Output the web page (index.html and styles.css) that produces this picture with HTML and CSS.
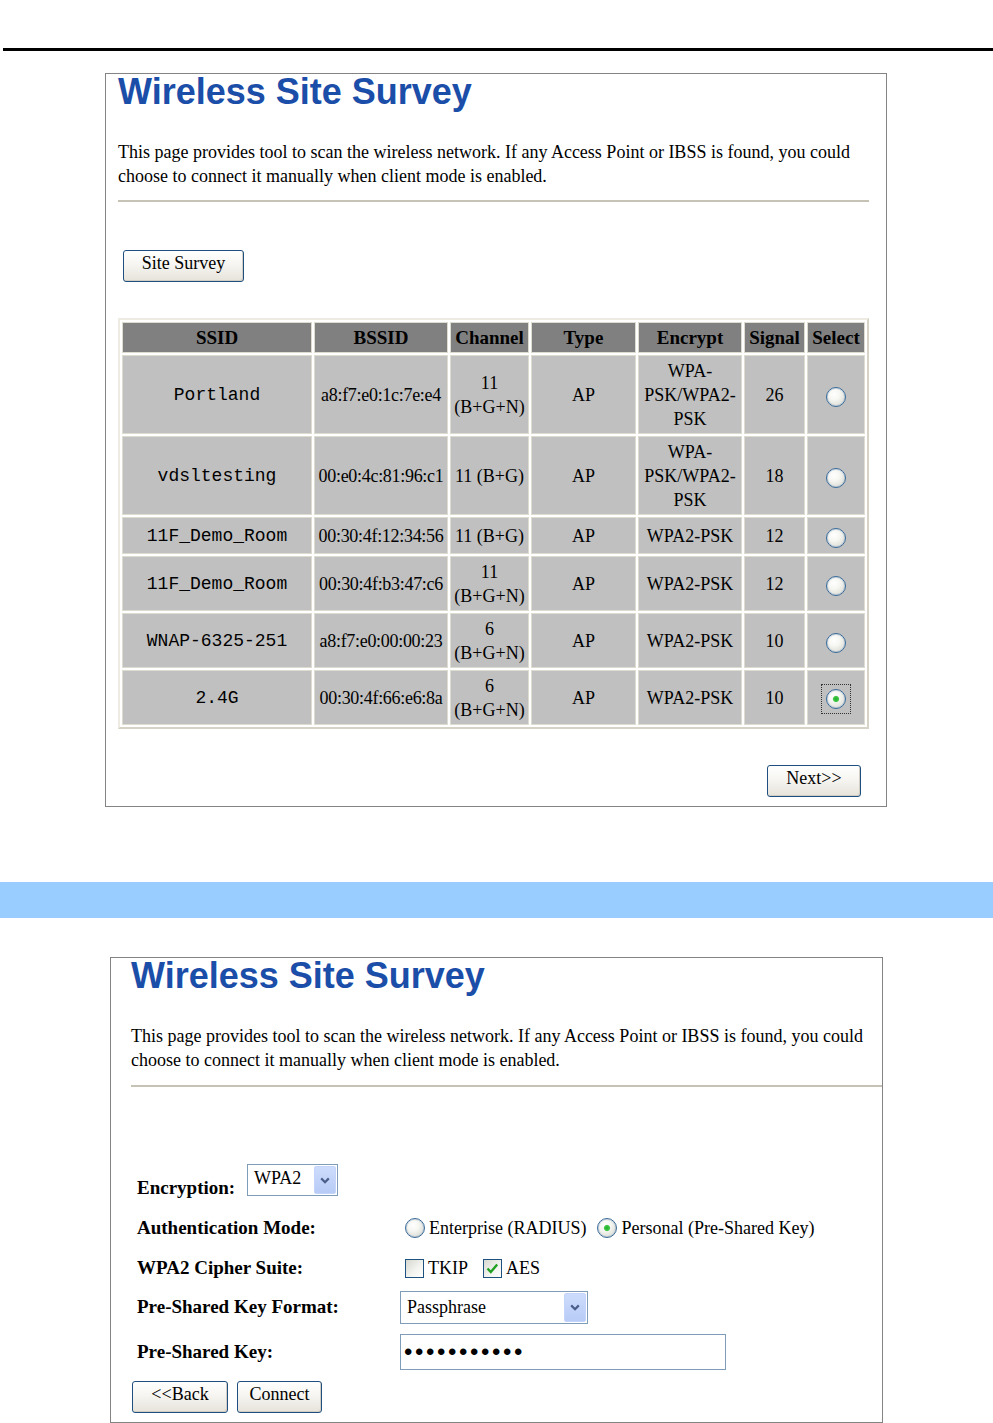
FILE: index.html
```html
<!DOCTYPE html>
<html lang="en">
<head>
<meta charset="utf-8">
<title>Wireless Site Survey</title>
<link rel="stylesheet" href="styles.css">
</head>
<body>
<div class="top-rule"></div>

<section class="panel panel-survey">
  <h1 class="title">Wireless Site Survey</h1>
  <p class="intro">This page provides tool to scan the wireless network. If any Access Point or IBSS is found, you could choose to connect it manually when client mode is enabled.</p>
  <hr class="sep">
  <button class="btn btn-survey" type="button">Site Survey</button>
  <table class="survey">
    <thead>
      <tr class="r-head">
        <th class="c-ssid">SSID</th>
        <th class="c-bssid">BSSID</th>
        <th class="c-chan">Channel</th>
        <th class="c-type">Type</th>
        <th class="c-enc">Encrypt</th>
        <th class="c-sig">Signal</th>
        <th class="c-sel">Select</th>
      </tr>
    </thead>
    <tbody>
      <tr class="r-3">
        <td class="mono">Portland</td>
        <td class="nw">a8:f7:e0:1c:7e:e4</td>
        <td>11 (B+G+N)</td>
        <td>AP</td>
        <td>WPA-PSK/WPA2-PSK</td>
        <td>26</td>
        <td><span class="radio"></span></td>
      </tr>
      <tr class="r-3">
        <td class="mono">vdsltesting</td>
        <td class="nw">00:e0:4c:81:96:c1</td>
        <td>11 (B+G)</td>
        <td>AP</td>
        <td>WPA-PSK/WPA2-PSK</td>
        <td>18</td>
        <td><span class="radio"></span></td>
      </tr>
      <tr class="r-1">
        <td class="mono">11F_Demo_Room</td>
        <td class="nw">00:30:4f:12:34:56</td>
        <td>11 (B+G)</td>
        <td>AP</td>
        <td>WPA2-PSK</td>
        <td>12</td>
        <td><span class="radio"></span></td>
      </tr>
      <tr class="r-2">
        <td class="mono">11F_Demo_Room</td>
        <td class="nw">00:30:4f:b3:47:c6</td>
        <td>11 (B+G+N)</td>
        <td>AP</td>
        <td>WPA2-PSK</td>
        <td>12</td>
        <td><span class="radio"></span></td>
      </tr>
      <tr class="r-2">
        <td class="mono">WNAP-6325-251</td>
        <td class="nw">a8:f7:e0:00:00:23</td>
        <td>6 (B+G+N)</td>
        <td>AP</td>
        <td>WPA2-PSK</td>
        <td>10</td>
        <td><span class="radio"></span></td>
      </tr>
      <tr class="r-2">
        <td class="mono">2.4G</td>
        <td class="nw">00:30:4f:66:e6:8a</td>
        <td>6 (B+G+N)</td>
        <td>AP</td>
        <td>WPA2-PSK</td>
        <td>10</td>
        <td><span class="focus-ring"><span class="radio on"></span></span></td>
      </tr>
    </tbody>
  </table>
  <div class="actions">
    <button class="btn btn-next" type="button">Next&gt;&gt;</button>
  </div>
</section>

<div class="band"></div>

<section class="panel panel-connect">
  <h1 class="title">Wireless Site Survey</h1>
  <p class="intro">This page provides tool to scan the wireless network. If any Access Point or IBSS is found, you could choose to connect it manually when client mode is enabled.</p>
  <hr class="sep sep-wide">
  <div class="form">
    <div class="row-enc">
      <span class="label label-enc">Encryption:</span>
      <div class="select select-enc">
        <span class="select-value">WPA2</span>
        <span class="select-btn"><svg width="10" height="7" viewBox="0 0 10 7"><polyline points="1.2,1.4 5,5.2 8.8,1.4" fill="none" stroke="#4b5e8a" stroke-width="2.2"/></svg></span>
      </div>
    </div>

    <span class="label">Authentication Mode:</span>
    <div class="field">
      <label class="opt opt-ent"><span class="radio"></span>Enterprise (RADIUS)</label>
      <label class="opt"><span class="radio on"></span>Personal (Pre-Shared Key)</label>
    </div>

    <span class="label">WPA2 Cipher Suite:</span>
    <div class="field">
      <label class="opt opt-tkip"><span class="check"></span>TKIP</label>
      <label class="opt"><span class="check"><svg width="17" height="17" viewBox="0 0 17 17"><polyline points="3.5,8.5 6.8,12 13.2,4.5" fill="none" stroke="#21a121" stroke-width="2.4"/></svg></span>AES</label>
    </div>

    <span class="label">Pre-Shared Key Format:</span>
    <div class="select select-fmt">
      <span class="select-value">Passphrase</span>
      <span class="select-btn"><svg width="10" height="7" viewBox="0 0 10 7"><polyline points="1.2,1.4 5,5.2 8.8,1.4" fill="none" stroke="#4b5e8a" stroke-width="2.2"/></svg></span>
    </div>

    <span class="label">Pre-Shared Key:</span>
    <input class="psk" type="password" value="12345678901" aria-label="Pre-Shared Key">
  </div>
  <div class="form-actions">
    <button class="btn btn-back" type="button">&lt;&lt;Back</button>
    <button class="btn btn-connect" type="button">Connect</button>
  </div>
</section>
</body>
</html>
```

FILE: styles.css
```css
* {
  box-sizing: border-box;
}

html {
  overflow: hidden;
}

body {
  margin: 0;
  background: #fff;
  color: #000;
  font-family: "Liberation Serif", "Times New Roman", serif;
  font-size: 18px;
}

.top-rule {
  height: 3px;
  margin: 48px 0 0 3px;
  background: #000;
}

.panel {
  border: 1px solid #848484;
  background: #fff;
}

.panel-survey {
  width: 782px;
  margin: 22px 0 0 105px;
  padding: 0 17px 9px 12px;
}

.panel-connect {
  width: 773px;
  margin: 39px 0 0 110px;
  padding: 0 0 9px 20px;
}

.title {
  margin: 0;
  font: bold 36px/36px "Liberation Sans", Arial, sans-serif;
  color: #1b4ea8;
}

.intro {
  margin: 30px 0 0;
  font-size: 18px;
  line-height: 24px;
}

.sep {
  margin: 12px 0 0;
  border: 0;
  height: 2px;
  background: #c6c2b6;
}

.sep-wide {
  margin-top: 13px;
}

.btn {
  display: block;
  height: 32px;
  padding: 0 0 5px;
  border: 1px solid #1f4f80;
  border-radius: 3px;
  background: linear-gradient(#ffffff, #f6f5f1 45%, #e6e3da);
  box-shadow: inset -1px -1px 0 #d2cec3;
  font-family: "Liberation Serif", "Times New Roman", serif;
  font-size: 18px;
  line-height: 25px;
  color: #000;
  text-align: center;
}

.btn-survey {
  width: 121px;
  margin: 48px 0 0 5px;
}

/* ---------- survey table ---------- */
.survey {
  margin-top: 36px;
  width: 751px;
  table-layout: fixed;
  border-collapse: separate;
  border-spacing: 2px;
  border: 2px solid;
  border-color: #eeebe2 #d6d2c6 #d6d2c6 #eeebe2;
  background: #fff;
}

.survey th,
.survey td {
  padding: 0 1px;
  border: 1px solid #dedbd0;
  text-align: center;
  vertical-align: middle;
  line-height: 24px;
}

.survey th {
  background: #808080;
  font-size: 19px;
  font-weight: bold;
}

.survey td {
  background: #c0c0c0;
  font-size: 18px;
}

.c-ssid { width: 190px; }
.c-bssid { width: 134px; }
.c-chan { width: 79px; }
.c-type { width: 105px; }
.c-enc { width: 104px; }
.c-sig { width: 61px; }
.c-sel { width: 58px; }

.r-head { height: 31px; }
.r-3 { height: 79px; }
.r-1 { height: 37px; }
.r-2 { height: 55px; }

.survey td.mono {
  font-family: "Liberation Mono", "Courier New", monospace;
  font-size: 18px;
}

.survey td.nw {
  white-space: nowrap;
  letter-spacing: -0.3px;
}

.survey .radio {
  margin-top: 3px;
}

.focus-ring {
  display: inline-block;
  margin-top: 3px;
  padding: 4px;
  border: 1px dotted #333;
  line-height: 0;
  vertical-align: middle;
}

.survey .focus-ring .radio {
  margin: 0;
}

/* ---------- controls ---------- */
.radio {
  display: inline-block;
  width: 20px;
  height: 20px;
  border: 1px solid #3a6a98;
  border-radius: 50%;
  background: radial-gradient(circle at 40% 35%, #ffffff 0%, #f6f6f2 35%, #d2d2ca 100%);
  box-shadow: inset 0 0 0 1px rgba(120, 160, 200, 0.35);
  vertical-align: middle;
  flex: none;
}

.radio.on {
  background:
    radial-gradient(circle at 50% 50%, #1fae2a 0, #45c84a 2.6px, rgba(255, 255, 255, 0) 3.6px),
    radial-gradient(circle at 40% 35%, #ffffff 0%, #f6f6f2 35%, #d2d2ca 100%);
}

.check {
  display: inline-flex;
  align-items: center;
  justify-content: center;
  width: 19px;
  height: 19px;
  border: 1px solid #1c5180;
  background: linear-gradient(135deg, #d8d8d2, #f4f4f0 60%, #ffffff);
  flex: none;
}

.actions {
  display: flex;
  justify-content: flex-end;
  margin-top: 36px;
}

.btn-next {
  width: 94px;
  margin-right: 8px;
}

/* ---------- band ---------- */
.band {
  height: 36px;
  margin-top: 75px;
  background: #99ccff;
}

/* ---------- connect form ---------- */
.form {
  margin: 73px 0 0 6px;
  display: grid;
  grid-template-columns: 263px 1fr;
  grid-template-rows: 48px 40px 40px 38px 52px;
  align-items: center;
}

.label {
  font-size: 19px;
  font-weight: bold;
  line-height: 24px;
}

.row-enc {
  grid-column: 1 / -1;
  align-self: stretch;
  display: flex;
  align-items: flex-end;
}

.label-enc {
  width: 110px;
  margin-bottom: 8px;
}

.select {
  display: flex;
  border: 1px solid #7f9db9;
  background: #fff;
  padding: 1px;
}

.select-value {
  flex: 1;
  padding-left: 5px;
  font-size: 18px;
  line-height: 24px;
}

.select-btn {
  width: 22px;
  display: flex;
  align-items: center;
  justify-content: center;
  border: 1px solid #c4d4fb;
  border-radius: 2px;
  background: linear-gradient(#cddcfc, #b7cbf6);
}

.select-enc {
  width: 91px;
  height: 32px;
  margin-bottom: 12px;
}

.select-fmt {
  width: 188px;
  height: 33px;
}

.select-fmt .select-value {
  padding-top: 2px;
}

.field {
  display: flex;
  align-items: center;
  padding-left: 5px;
}

.opt {
  display: inline-flex;
  align-items: center;
  gap: 4px;
  font-size: 18px;
  line-height: 24px;
}

.opt-ent {
  margin-right: 11px;
}

.opt-tkip {
  margin-right: 15px;
}

.psk {
  width: 326px;
  height: 36px;
  margin: 0;
  padding: 0 0 0 3px;
  border: 1px solid #7f9db9;
  font-family: "Liberation Sans", Arial, sans-serif;
  font-size: 24px;
  letter-spacing: 2.6px;
  color: #000;
  background: #fff;
  outline: none;
}

.form-actions {
  display: flex;
  gap: 9px;
  margin: 3px 0 0 1px;
}

.btn-back {
  width: 96px;
}

.btn-connect {
  width: 85px;
}
```
